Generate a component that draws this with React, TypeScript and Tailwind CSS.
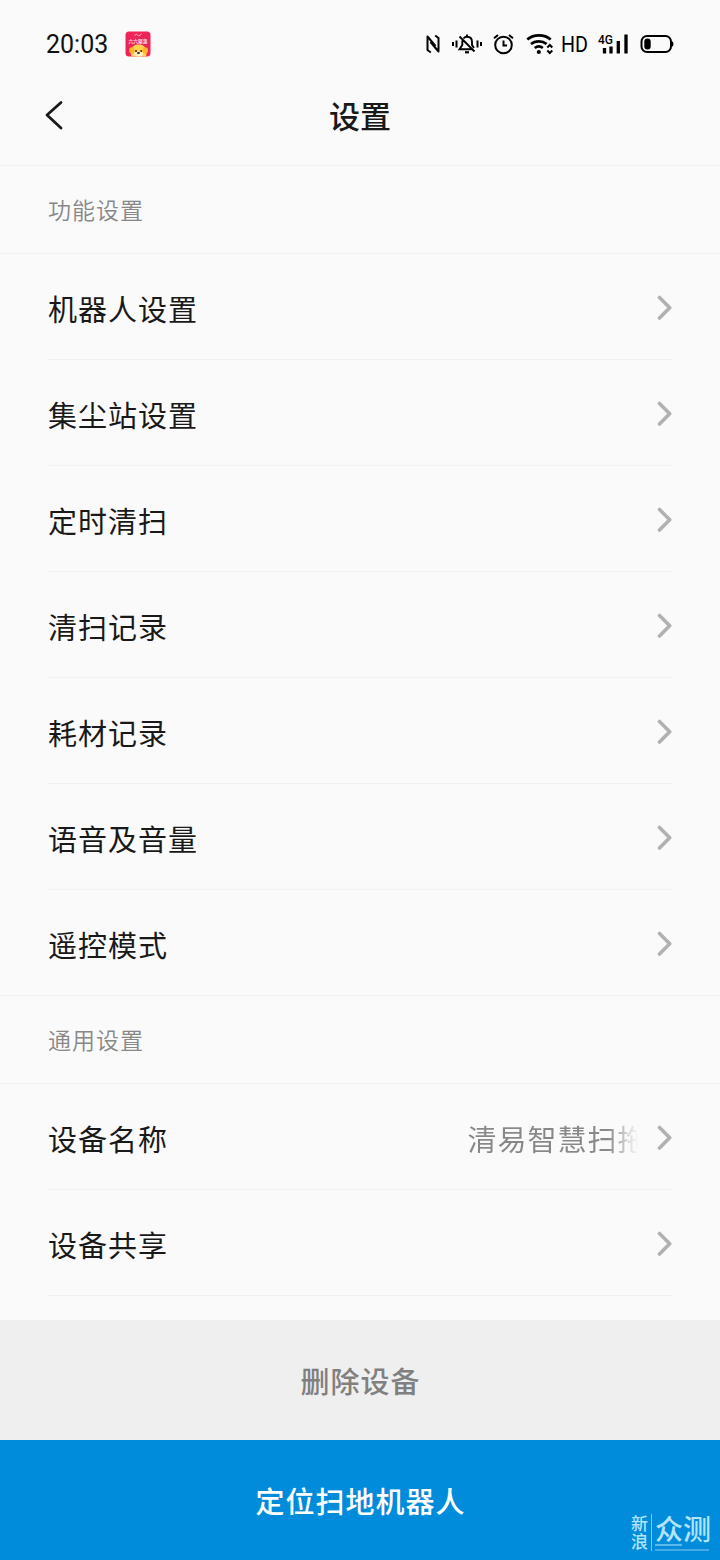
interface RowProps {
  label: string
  value?: string
  last?: boolean
}

const functionRows = ['机器人设置', '集尘站设置', '定时清扫', '清扫记录', '耗材记录', '语音及音量', '遥控模式']

function AppBadge() {
  return (
    <svg className="ml-[17px] h-[26px] w-[26px]" viewBox="0 0 26 26">
      <rect x="0.5" y="0.5" width="25" height="25" rx="3.5" fill="#ec2458" />
      <path d="M9.500 4.500l2-1.500 2 2 3-2" stroke="#ffb3c8" strokeWidth="1" fill="none" />
      <text x="13" y="11.500" fontSize="4.800" fontWeight="700" fill="#ffd9e4" textAnchor="middle" fontFamily="Noto Sans CJK SC">
        六六聚惠
      </text>
      <path d="M6.500 25.500c-1-2 0-3 0-5C6.500 15.500 9 13.500 13.500 13.500s7 2 7.500 6c0 2 1 4 0 6z" fill="#ffd24d" />
      <ellipse cx="6.800" cy="19.500" rx="2.600" ry="3.300" fill="#ffb52e" />
      <ellipse cx="20.300" cy="19.500" rx="2.600" ry="3.300" fill="#ffb52e" />
      <ellipse cx="13.500" cy="23" rx="4.500" ry="2.500" fill="#fff1c9" />
      <circle cx="11" cy="20" r="1" fill="#3b2114" />
      <circle cx="16.200" cy="20" r="1" fill="#3b2114" />
      <ellipse cx="13.500" cy="22" rx="1.500" ry="1" fill="#3b2114" />
    </svg>
  )
}

function StatusIcons() {
  return (
    <div className="flex h-6 items-center text-black">
      {/* NFC */}
      <svg className="h-6 w-[14px]" viewBox="0 0 14 24" fill="none" stroke="currentColor" strokeWidth="2" strokeLinejoin="round">
        <path d="M4.800 20.500L1.500 18V4.500L9.500 14M9.200 3.500L12.500 6v13.500L4.500 10" />
      </svg>
      {/* Muted bell */}
      <svg className="ml-3 h-6 w-[30px]" viewBox="0 0 30 24" fill="none" stroke="currentColor" strokeWidth="1.900">
        <path d="M1 10v4M4.500 8.500v7M25.500 8.500v7M29 10v4" strokeWidth="2" />
        <path d="M11.500 6.500c1-1.300 2.200-1.800 3.500-1.800 3.300 0 5 2.300 5 5.300v3l2 3M10.300 8.500V13l-2.800 4.300h12.500M7.500 4.500L22.500 19.500M15 2.500v2" />
        <path d="M13 20.300h4" strokeWidth="2.200" />
      </svg>
      {/* Alarm */}
      <svg className="ml-[11px] h-6 w-[21px]" viewBox="0 0 21 24" fill="none" stroke="currentColor" strokeWidth="2">
        <circle cx="10.500" cy="13" r="8.300" />
        <path d="M10.500 8.500v5h3.600M1 6.300l4-3.300M20 6.300L16 3" />
      </svg>
      {/* Wi-Fi */}
      <svg className="ml-3 h-6 w-[27px]" viewBox="0 0 27 24" fill="none" stroke="currentColor" strokeWidth="2.700">
        <path d="M1.300 7.500c6.200-5.500 17.200-5.500 23.400 0M5 12c4.300-3.600 11.300-3.600 15.600 0M8.800 16c2.400-1.900 5.600-1.900 8 0" />
        <circle cx="12.800" cy="20" r="2.100" fill="currentColor" stroke="none" />
        <path d="M21.300 15.500l2.500-2.500 2.500 2.500M21.300 18.500l2.500 2.500 2.500-2.500" strokeWidth="2" />
      </svg>
      <svg className="ml-[9px] h-6 w-[26px] overflow-visible" viewBox="0 0 26 24">
        <text x="-1" y="19.700" fontSize="21.500" fontFamily="Roboto" fill="currentColor" textLength="27" lengthAdjust="spacingAndGlyphs">
          HD
        </text>
      </svg>
      {/* Signal */}
      <svg className="ml-[10px] h-6 w-[30px] overflow-visible" viewBox="0 0 30 24">
        <text x="0" y="11.800" fontSize="12.800" fontWeight="500" fontFamily="Roboto" fill="currentColor" textLength="15" lengthAdjust="spacingAndGlyphs">
          4G
        </text>
        <path d="M6.500 16v5.500M13 14.500v7M20.300 9v12.500M28 2.500v19" stroke="currentColor" strokeWidth="3.300" />
      </svg>
      {/* Battery */}
      <svg className="ml-3 h-6 w-[35px]" viewBox="0 0 35 24">
        <rect x="1.500" y="4" width="29.500" height="16" rx="5.500" fill="none" stroke="currentColor" strokeWidth="2" />
        <rect x="4.300" y="6.500" width="6.400" height="11" rx="3" fill="currentColor" />
        <path d="M31.500 9c2.600.6 2.600 5.400 0 6z" fill="currentColor" />
      </svg>
    </div>
  )
}

function Chevron() {
  return (
    <svg className="h-7 w-4" viewBox="0 0 16 28" fill="none" stroke="#b1b1b1" strokeWidth="3.600" strokeLinecap="round" strokeLinejoin="round">
      <path d="M3.500 4.500l10.200 10.200L3.500 25" />
    </svg>
  )
}

function SectionTitle({ title }: { title: string }) {
  return (
    <div className="flex h-[88px] items-center border-b border-[#f1f1f1] px-12 text-[23px] tracking-[1px] text-[#888888]">
      <span className="font-[350]">{title}</span>
    </div>
  )
}

function SettingRow({ label, value, last }: RowProps) {
  return (
    <div
      className={
        last
          ? 'flex h-[106px] items-center justify-between border-b border-[#f1f1f1] px-12'
          : 'mx-12 flex h-[106px] items-center justify-between border-b border-[#f1f1f1]'
      }
    >
      <span className="pt-1 text-[29px] tracking-[1px] text-[#191919]">{label}</span>
      <div className="flex items-center gap-[18px]">
        {value && (
          <span className="w-[170.5px] overflow-hidden bg-linear-to-r from-[#888888] from-82% to-transparent bg-clip-text pt-1 text-[29px] tracking-[1px] whitespace-nowrap text-transparent">
            {value}
          </span>
        )}
        <Chevron />
      </div>
    </div>
  )
}

function Watermark() {
  return (
    <div className="absolute right-[9px] bottom-[9px] flex h-[37px] tracking-normal text-[#b4e4fb]">
      <div className="flex w-[20px] flex-col text-[17px] leading-[18px]">
        <span>新</span>
        <span>浪</span>
      </div>
      <div className="mr-[3px] w-px bg-[#7cc9f0]" />
      <div className="w-[56px]">
        <div className="text-[28px] leading-[28px] font-medium whitespace-nowrap">众测</div>
        <div className="mt-[2px] h-[2px] w-[27px] bg-[#5db9ea]" />
        <div className="mt-[3px] h-[2px] w-[54px] bg-[#45abe4]" />
      </div>
    </div>
  )
}

export default function App() {
  return (
    <div className="flex h-[1560px] w-[720px] flex-col overflow-hidden bg-[#fafafa] font-['Noto_Sans_CJK_SC',sans-serif]">
      <div className="flex h-[68px] items-center justify-between pt-5 pr-[45px] pl-[46px]">
        <div className="flex items-center">
          <span className="pt-px font-[Roboto,sans-serif] text-[25px] leading-6 text-[#111111]">20:03</span>
          <AppBadge />
        </div>
        <StatusIcons />
      </div>

      <header className="grid h-[98px] grid-cols-[1fr_auto_1fr] items-center border-b border-[#f1f1f1] px-11 pb-[3px]">
        <button aria-label="返回">
          <svg className="h-8 w-5" viewBox="0 0 20 32" fill="none" stroke="#191919" strokeWidth="2.800" strokeLinecap="round" strokeLinejoin="round">
            <path d="M17 3.500L3 16l14 13" />
          </svg>
        </button>
        <h1 className="text-[31px] font-medium text-[#191919]">设置</h1>
      </header>

      <main className="flex-1 overflow-hidden">
        <SectionTitle title="功能设置" />
        {functionRows.map((label, i) => (
          <SettingRow key={label} label={label} last={i === functionRows.length - 1} />
        ))}
        <SectionTitle title="通用设置" />
        <SettingRow label="设备名称" value="清易智慧扫拖机器人" />
        <SettingRow label="设备共享" />
      </main>

      <footer className="relative text-[29px] font-medium tracking-[1px]">
        <button className="block h-[120px] w-full bg-[#efefef] pt-px pl-px text-[#808080]">删除设备</button>
        <button className="block h-[120px] w-full bg-[#008cdb] pt-px pl-px text-white">定位扫地机器人</button>
        <Watermark />
      </footer>
    </div>
  )
}
